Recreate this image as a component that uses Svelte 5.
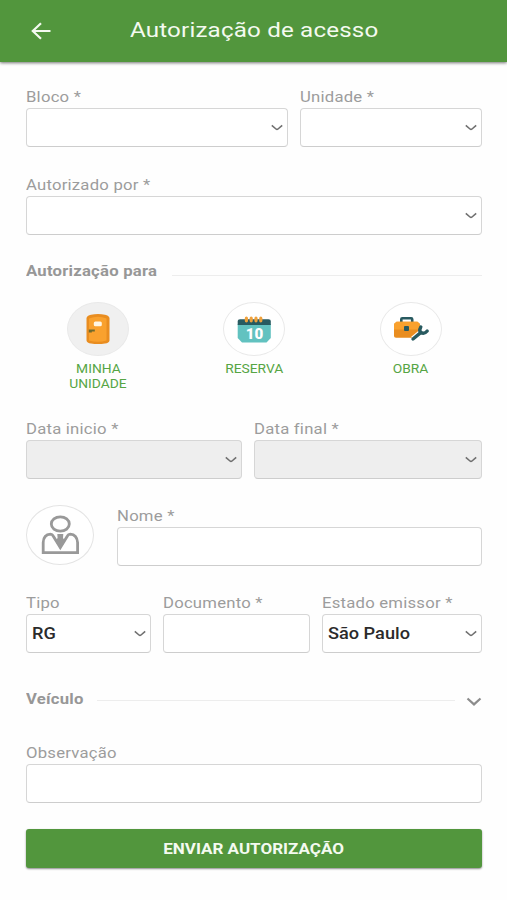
<script lang="ts">
  type Choice = 'unidade' | 'reserva' | 'obra';

  let choice: Choice = $state('unidade');
  let nome = $state('');
  let documento = $state('');
  let observacao = $state('');

  const choices: { id: Choice; lines: string[] }[] = [
    { id: 'unidade', lines: ['MINHA', 'UNIDADE'] },
    { id: 'reserva', lines: ['RESERVA'] },
    { id: 'obra', lines: ['OBRA'] }
  ];
</script>

{#snippet chevron()}
  <svg class="chevron" width="12" height="8" viewBox="0 0 12 8">
    <path d="M0.8 1.4 L5 5 Q6 5.8 7 5 L11.2 1.4" />
  </svg>
{/snippet}

{#snippet select(label: string, value: string, disabled: boolean)}
  <div class="field">
    <span class="label"><span class="wide">{label}</span></span>
    <button type="button" class="control select" {disabled} aria-label={label}>
      <span class="wide">{value}</span>
      {@render chevron()}
    </button>
  </div>
{/snippet}

<div class="page">
  <header>
    <button type="button" class="back" aria-label="Voltar">
      <svg width="20" height="18" viewBox="0 0 20 18">
        <path d="M19.5 9 H1.8 M10 1.2 L1.8 9 L10 16.8" />
      </svg>
    </button>
    <h1><span class="wide">Autorização de acesso</span></h1>
  </header>

  <form onsubmit={(e) => e.preventDefault()}>
    <div class="row place">
      {@render select('Bloco *', '', false)}
      {@render select('Unidade *', '', false)}
    </div>

    <div class="row author">
      {@render select('Autorizado por *', '', false)}
    </div>

    <div class="section">
      <h2 class="for"><span class="wide">Autorização para</span></h2>
      <hr />
    </div>

    <div class="choices">
      {#each choices as item (item.id)}
        <button type="button" class="choice" onclick={() => (choice = item.id)}>
          <span class="circle" class:selected={choice === item.id}>
            <svg width="60" height="52" viewBox="1 1 60 52">
              {#if item.id === 'unidade'}
                <path class="orange" d="M19.5 16 Q20 13.5 24 12.7 Q31 11.4 38 12.7 Q42 13.5 42.5 16 V38.5 Q42 41 38 41.5 Q31 42.6 24 41.5 Q20 41 19.5 38.5 Z" />
                <path class="amber" d="M22 16.5 Q31 12.8 39.5 16.5 V38.5 Q31 41 22 38.5 Z" />
                <rect class="paper" x="26.8" y="19.6" width="8" height="4.6" rx="1.5" />
                <path class="brass" d="M21.8 27.4 H27.8 V29.4 H24.8 V30.4 H21.8 Z" />
              {:else if item.id === 'reserva'}
                <path class="teal" d="M14.7 22 H47.8 V36 L43.5 40.4 H19 L14.7 36 Z" />
                <path class="dark" d="M17 17.3 H45.5 Q47.8 17.3 47.8 19 V23 H14.7 V19 Q14.7 17.3 17 17.3 Z" />
                <path class="rings" d="M23.4 16.2 V18.8 M28.2 16.2 V18.8 M33 16.2 V18.8 M37.8 16.2 V18.8" />
                <text x="31.4" y="36.6" textLength="17.5" lengthAdjust="spacingAndGlyphs">10</text>
              {:else}
                <path class="handle" d="M21.3 21 V17.3 Q21.3 16.3 22.3 16.3 H31.2 Q32.2 16.3 32.2 17.3 V21" />
                <path class="orange" d="M16.5 19.7 H37.5 L40 22 V34 Q40 35.7 38 35.7 H16 Q14 35.7 14 34 V22 Z" />
                <path class="amber" d="M16.5 19.7 H37.5 L40 22 V27.5 H14 V22 Z" />
                <rect class="dark" x="24" y="24" width="5" height="5" rx="1" />
                <path class="wrench-edge" d="M33 37 L41 30.4" />
                <path class="wrench" d="M33 37 L41 30.4 M40.8 25 Q38.7 28.8 41 30.6 Q44.5 32.3 47.2 29" />
              {/if}
            </svg>
          </span>
          {#each item.lines as line}
            <span class="caption"><span class="wide">{line}</span></span>
          {/each}
        </button>
      {/each}
    </div>

    <div class="row dates">
      {@render select('Data inicio *', '', true)}
      {@render select('Data final *', '', true)}
    </div>

    <div class="row person">
      <div class="avatar">
        <svg width="66" height="58" viewBox="1 1 66 58">
          <ellipse cx="34.3" cy="19" rx="9" ry="7.2" />
          <path d="M17.2 47.6 V37.5 Q17.5 29.8 24.5 29.2 Q26.3 29.2 27.2 31 L34.3 42.5 L41.4 31 Q42.3 29.2 44.2 29.2 Q51 29.8 51.6 37.5 V47.6 Z" />
          <path class="tie" d="M31.3 29 H37.3 L37 33 L39.2 36 L34.3 44 L29.4 36 L31.6 33 Z" />
        </svg>
      </div>
      <div class="field">
        <label class="label" for="nome"><span class="wide">Nome *</span></label>
        <input class="control" id="nome" bind:value={nome} />
      </div>
    </div>

    <div class="row document">
      {@render select('Tipo', 'RG', false)}
      <div class="field">
        <label class="label" for="documento"><span class="wide">Documento *</span></label>
        <input class="control" id="documento" bind:value={documento} />
      </div>
      {@render select('Estado emissor *', 'São Paulo', false)}
    </div>

    <div class="section vehicle">
      <h2><span class="wide">Veículo</span></h2>
      <hr />
      <svg class="expand" width="16" height="10" viewBox="0 0 16 10">
        <path d="M1.5 1.5 L8 7.4 L14.5 1.5" />
      </svg>
    </div>

    <div class="field">
      <label class="label" for="observacao"><span class="wide">Observação</span></label>
      <input class="control" id="observacao" bind:value={observacao} />
    </div>

    <button type="submit" class="submit"><span class="wide">ENVIAR AUTORIZAÇÃO</span></button>
  </form>
</div>

<style>
  :global(body) {
    background: #fff;
  }

  .page {
    box-sizing: border-box;
    width: 507px;
    height: 900px;
    overflow: hidden;
    background: #fefefe;
    font-family: Roboto, "Liberation Sans", sans-serif;
  }

  button {
    font-family: inherit;
    padding: 0;
    border: none;
    background: none;
  }

  svg {
    display: block;
    fill: none;
  }

  /* all type is set slightly extended */
  .wide {
    display: inline-block;
    white-space: nowrap;
    transform: scaleX(1.15);
    transform-origin: left center;
  }

  header {
    display: flex;
    align-items: center;
    height: 62px;
    background: #52963d;
    box-shadow: 0 1px 3px rgba(0, 0, 0, 0.55);
  }

  .back {
    margin: 0 79px 0 31px;
  }

  .back path {
    stroke: #f4faf0;
    stroke-width: 2.2;
  }

  h1 {
    margin: 0;
    padding-bottom: 2px;
    font-size: 21px;
    font-weight: 400;
    line-height: 26px;
    letter-spacing: 0.15px;
    color: #f4faf0;
  }

  form {
    padding: 25px 25px 0 26px;
  }

  .row {
    display: grid;
    column-gap: 12px;
    margin-bottom: 27px;
  }

  .place {
    grid-template-columns: 262px 1fr;
    margin-bottom: 28px;
  }

  .author {
    margin-bottom: 26px;
  }

  .dates {
    grid-template-columns: 216px 1fr;
  }

  .person {
    grid-template-columns: 68px 1fr;
    column-gap: 23px;
  }

  .document {
    grid-template-columns: 125px 147px 1fr;
    margin-bottom: 36px;
  }

  .field {
    min-width: 0;
  }

  .label {
    display: block;
    box-sizing: border-box;
    height: 21px;
    padding-top: 1px;
    font-size: 14.5px;
    line-height: 20px;
    letter-spacing: 0.2px;
    color: #9c9c9c;
  }

  .control {
    display: block;
    box-sizing: border-box;
    width: 100%;
    height: 39px;
    padding: 0 6px;
    border: 1px solid #d6d6d6;
    border-bottom-color: #cdcdcd;
    border-radius: 4px;
    background: #fff;
    font-size: 15px;
    outline: none;
  }

  .select {
    display: flex;
    align-items: center;
    justify-content: space-between;
    padding: 0 4px 0 5px;
    font-size: 15.8px;
    font-weight: 500;
    color: #2b2b2b;
  }

  .select:disabled {
    background: #eee;
  }

  .chevron path {
    stroke: #707070;
    stroke-width: 1.6;
  }

  .section {
    display: flex;
    align-items: center;
    height: 20px;
    margin-bottom: 21px;
  }

  h2 {
    width: 71px;
    margin: 0;
    padding-top: 2px;
    font-size: 14.5px;
    font-weight: 700;
    line-height: 20px;
    letter-spacing: 0.2px;
    color: #979797;
  }

  h2.for {
    width: 146px;
  }

  hr {
    flex: 1;
    height: 1px;
    margin: 8px 0 0;
    border: none;
    background: #ededed;
  }

  .vehicle {
    margin-bottom: 34px;
  }

  .vehicle hr {
    margin: 3px 11px 0 0;
  }

  .expand {
    margin-top: 5px;
  }

  .expand path {
    stroke: #8c8c8c;
    stroke-width: 2.2;
  }

  .choices {
    display: grid;
    grid-template-columns: repeat(3, 1fr);
    height: 90px;
    margin: 0 -7px 27px -6px;
  }

  .choice {
    display: flex;
    flex-direction: column;
    align-items: center;
  }

  .circle {
    box-sizing: border-box;
    width: 62px;
    height: 54px;
    margin-bottom: 6px;
    border: 1px solid #e9e9e9;
    border-radius: 50%;
    background: #fff;
  }

  .circle.selected {
    background: #f0f0f0;
  }

  .caption {
    font-size: 12px;
    line-height: 15px;
    color: #56a544;
  }

  .caption .wide,
  .submit .wide {
    transform-origin: center;
  }

  .orange {
    fill: #e98d20;
  }

  .amber {
    fill: #f9a12e;
  }

  .paper {
    fill: #fff6e4;
  }

  .brass {
    fill: #6f6a2c;
  }

  .teal {
    fill: #62c2c0;
  }

  .dark {
    fill: #285a60;
  }

  .rings {
    stroke: #efa13b;
    stroke-width: 3.2;
    stroke-linecap: round;
  }

  text {
    font-size: 15px;
    font-weight: 900;
    text-anchor: middle;
    fill: #fff;
  }

  .handle {
    stroke: #285a60;
    stroke-width: 2.6;
  }

  .wrench-edge {
    stroke: #fff;
    stroke-width: 5.6;
  }

  .wrench {
    stroke: #285a60;
    stroke-width: 3.4;
    stroke-linecap: round;
  }

  .avatar {
    box-sizing: border-box;
    width: 68px;
    height: 60px;
    margin-top: -1px;
    border: 1px solid #e4e4e4;
    border-radius: 50%;
    background: #fff;
  }

  .avatar ellipse,
  .avatar path {
    stroke: #999;
    stroke-width: 2.8;
  }

  .avatar .tie {
    fill: #999;
    stroke: none;
  }

  .submit {
    display: block;
    width: 100%;
    height: 39px;
    margin-top: 26px;
    border-radius: 3px;
    background: #52963d;
    box-shadow: 0 1px 2px rgba(0, 0, 0, 0.45);
    font-size: 14.8px;
    font-weight: 700;
    color: #f4faf0;
  }
</style>
